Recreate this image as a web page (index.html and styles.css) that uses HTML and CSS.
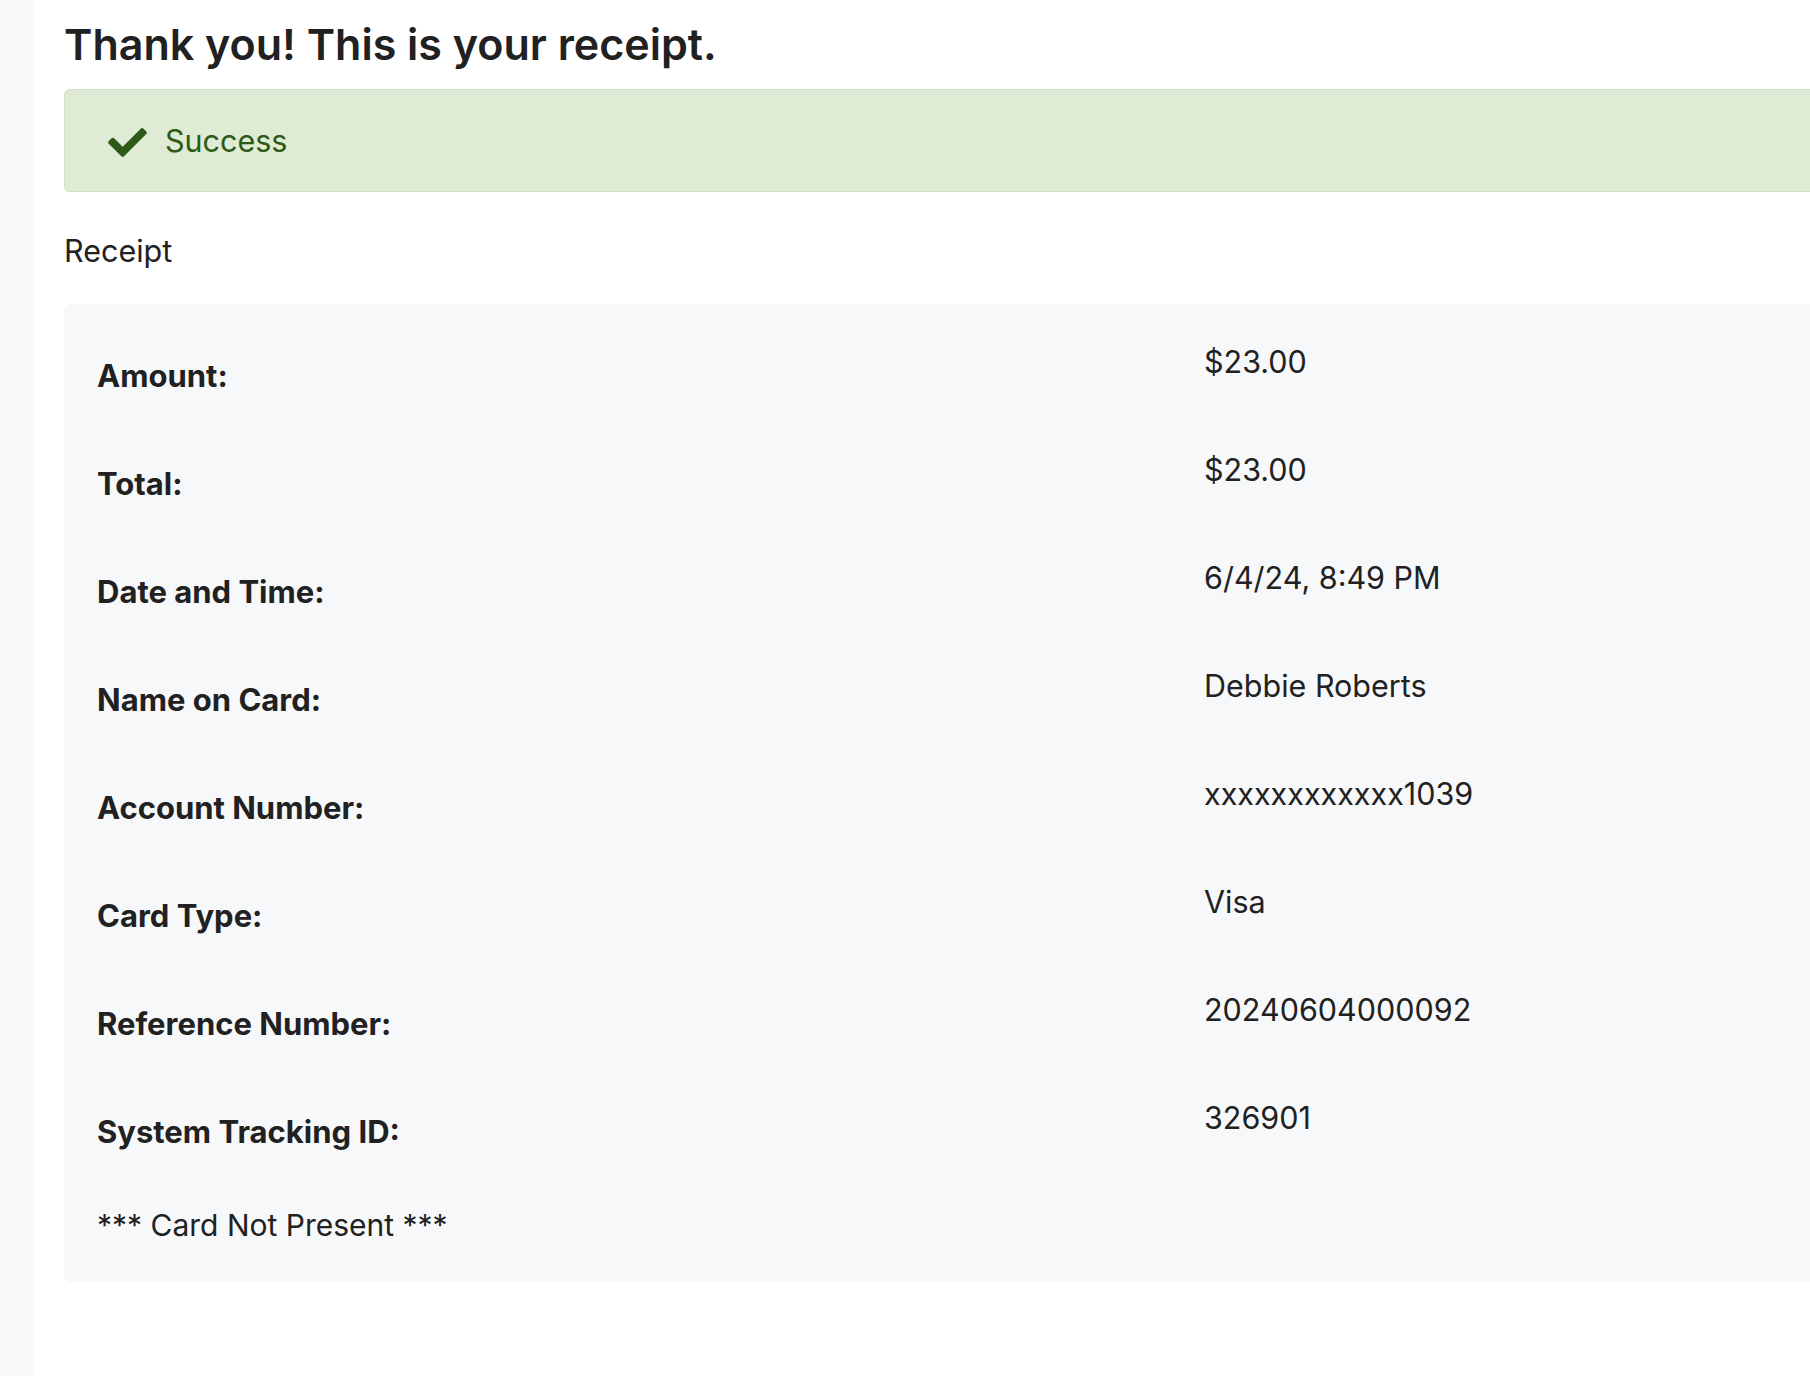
FILE: index.html
```html
<!DOCTYPE html>
<html lang="en">
<head>
<meta charset="utf-8">
<title>Receipt</title>
<link rel="stylesheet" href="styles.css">
</head>
<body>
<div class="layout">
  <aside class="sidebar"></aside>
  <main class="main">
    <h1 class="title">Thank you! This is your receipt.</h1>
    <div class="alert">
      <svg class="alert-icon" viewBox="0 64 512 384" width="39" height="29" aria-hidden="true"><path fill="currentColor" d="M173.898 439.404l-166.4-166.4c-9.997-9.997-9.997-26.206 0-36.204l36.203-36.204c9.997-9.998 26.207-9.998 36.204 0L192 312.69 432.095 72.596c9.997-9.997 26.207-9.997 36.204 0l36.203 36.204c9.997 9.997 9.997 26.206 0 36.204l-294.4 294.401c-9.998 9.997-26.207 9.997-36.204-.001z"/></svg>
      <span class="alert-text">Success</span>
    </div>
    <p class="section-label">Receipt</p>
    <div class="receipt">
      <div class="row"><div class="label">Amount:</div><div class="value">$23.00</div></div>
      <div class="row"><div class="label">Total:</div><div class="value">$23.00</div></div>
      <div class="row"><div class="label">Date and Time:</div><div class="value">6/4/24, 8:49 PM</div></div>
      <div class="row"><div class="label">Name on Card:</div><div class="value">Debbie Roberts</div></div>
      <div class="row"><div class="label">Account Number:</div><div class="value">xxxxxxxxxxxx1039</div></div>
      <div class="row"><div class="label">Card Type:</div><div class="value">Visa</div></div>
      <div class="row"><div class="label">Reference Number:</div><div class="value">20240604000092</div></div>
      <div class="row"><div class="label">System Tracking ID:</div><div class="value">326901</div></div>
      <div class="note">*** Card Not Present ***</div>
    </div>
  </main>
</div>
</body>
</html>
```

FILE: styles.css
```css
html, body {
  margin: 0;
  padding: 0;
  background: #ffffff;
}

body {
  font-family: Inter, "Noto Sans", "Liberation Sans", sans-serif;
  color: #212529;
  font-size: 30px;
  line-height: 45px;
  overflow: hidden;
}

.layout {
  display: flex;
  min-height: 1376px;
}

.sidebar {
  width: 34px;
  flex: 0 0 34px;
  background: #f7f8fa;
}

.main {
  flex: 1 1 auto;
  padding-left: 30px;
  min-width: 0;
}

.title {
  margin: 18px 0 18px 0;
  font-size: 43px;
  line-height: 53px;
  font-weight: 600;
  color: #212121;
}

.alert {
  display: flex;
  align-items: center;
  height: 103px;
  box-sizing: border-box;
  background: #dfebd4;
  border: 1px solid #cfe2c1;
  border-right: none;
  border-radius: 6px 0 0 6px;
  padding-left: 43px;
  color: #2d5a17;
}

.alert-icon {
  margin-right: 18px;
  margin-top: 4px;
}

.alert-text {
  font-size: 30.5px;
}

.section-label {
  margin: 36px 0 31px 0;
  font-size: 30.5px;
  color: #212121;
}

.receipt {
  background: #f7f8fa;
  border-radius: 8px 0 0 8px;
  padding: 35px 33px 34px 33px;
}

.row {
  display: grid;
  grid-template-columns: 1107px 1fr;
  height: 108px;
}

.label {
  font-weight: 700;
  font-size: 31px;
  padding-top: 14px;
  color: #212121;
}

.value {
  font-size: 30.5px;
  color: #212121;
}

.note {
  color: #212121;
}
```
